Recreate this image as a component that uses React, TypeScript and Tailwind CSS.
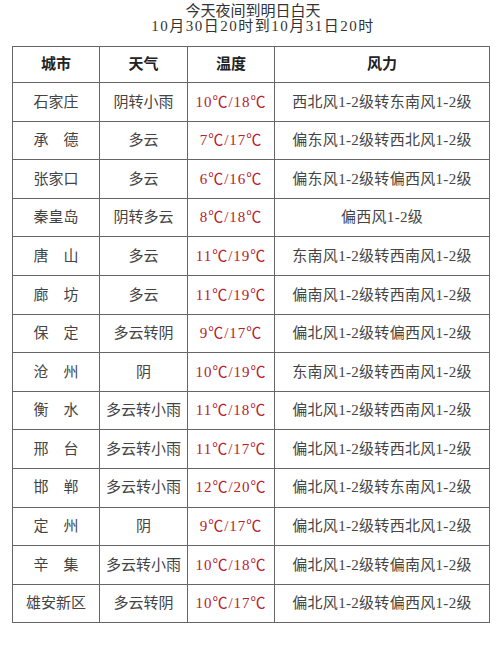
const ROWS: Array<[string, string, string, string]> = [
  ["石家庄", "阴转小雨", "10℃/18℃", "西北风1-2级转东南风1-2级"],
  ["承　德", "多云", "7℃/17℃", "偏东风1-2级转西北风1-2级"],
  ["张家口", "多云", "6℃/16℃", "偏东风1-2级转偏西风1-2级"],
  ["秦皇岛", "阴转多云", "8℃/18℃", "偏西风1-2级"],
  ["唐　山", "多云", "11℃/19℃", "东南风1-2级转西南风1-2级"],
  ["廊　坊", "多云", "11℃/19℃", "偏南风1-2级转西南风1-2级"],
  ["保　定", "多云转阴", "9℃/17℃", "偏北风1-2级转偏西风1-2级"],
  ["沧　州", "阴", "10℃/19℃", "东南风1-2级转西南风1-2级"],
  ["衡　水", "多云转小雨", "11℃/18℃", "偏北风1-2级转西南风1-2级"],
  ["邢　台", "多云转小雨", "11℃/17℃", "偏北风1-2级转西北风1-2级"],
  ["邯　郸", "多云转小雨", "12℃/20℃", "偏北风1-2级转东南风1-2级"],
  ["定　州", "阴", "9℃/17℃", "偏北风1-2级转西北风1-2级"],
  ["辛　集", "多云转小雨", "10℃/18℃", "偏北风1-2级转偏南风1-2级"],
  ["雄安新区", "多云转阴", "10℃/17℃", "偏北风1-2级转偏西风1-2级"],
];

const FONT = "font-['Liberation_Serif','Noto_Sans_CJK_SC',serif]";

export default function App() {
  return (
    <div className={`h-[646px] w-[500px] bg-white text-[#444] ${FONT}`}>
      <div className="pt-[4px] text-center text-[15px] leading-[15px] text-[#333]">
        <div className="pl-[6px]">今天夜间到明日白天</div>
        <div className="pl-[26px] tracking-[1.5px]">10月30日20时到10月31日20时</div>
      </div>

      <table className="ml-[12px] mt-[12px] w-[477px] table-fixed border-collapse text-center text-[15px]">
        <colgroup>
          <col className="w-[87px]" />
          <col className="w-[88px]" />
          <col className="w-[87px]" />
          <col className="w-[215px]" />
        </colgroup>
        <thead>
          <tr className="h-[36px] font-bold text-[#222]">
            <th className="border border-[#666] p-0">城市</th>
            <th className="border border-[#666] p-0">天气</th>
            <th className="border border-[#666] p-0">温度</th>
            <th className="border border-[#666] p-0">风力</th>
          </tr>
        </thead>
        <tbody>
          {ROWS.map(([city, weather, temp, wind]) => (
            <tr key={city} className="h-[38.6px]">
              <td className="whitespace-nowrap border border-[#666] p-0">{city}</td>
              <td className="whitespace-nowrap border border-[#666] p-0">{weather}</td>
              <td className="whitespace-nowrap border border-[#666] p-0 tracking-[1px] text-[#b8202a]">
                {temp}
              </td>
              <td className="whitespace-nowrap border border-[#666] p-0 tracking-[0.3px]">{wind}</td>
            </tr>
          ))}
        </tbody>
      </table>
    </div>
  );
}
